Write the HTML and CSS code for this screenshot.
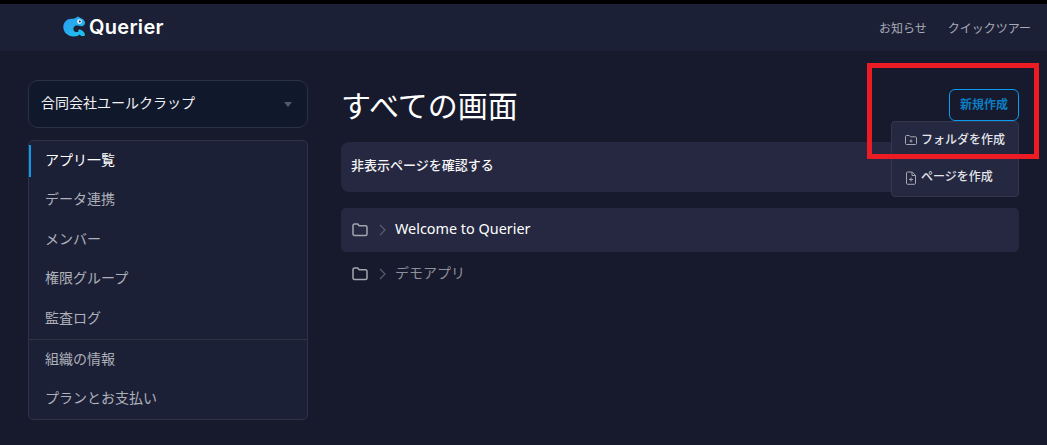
FILE: index.html
```html
<!DOCTYPE html>
<html lang="ja">
<head>
<meta charset="utf-8">
<title>Querier</title>
<link rel="stylesheet" href="styles.css">
</head>
<body>
<div class="topstrip"></div>
<header class="header">
  <div class="logo">
    <svg class="logo-mark" width="23" height="22" viewBox="0 0 23 22">
      <defs><linearGradient id="lg" x1="0" y1="0" x2="1" y2="1"><stop offset="0" stop-color="#2f9bf0"/><stop offset="1" stop-color="#19c4ee"/></linearGradient></defs>
      <path d="M15 0.5c1.500 0.800 2 1.300 3 1.700 2.500 0.800 4 2.700 4 4.600 0 2-1.600 3.400-3.600 3.400-2.600-0.200-4.400-1.400-6.400-0.300-1.800 1-2.200 3.400-0.900 5 1 1.200 2.700 1.500 4.300 0.900-0.400-0.900-0.100-2 0.800-2.300 1.600-0.400 3.600 1.200 5.100 3.300 0.600 0.900 0.700 2 0.200 3.200h-3.500c-0.300-0.800-0.700-1.300-1.300-1.600-1.300 1.200-3.400 2-6.100 2C5 20.400 0.300 16.500 0.300 11 0.300 5.600 4.700 2.200 9.500 2.700c2 0.200 3.500-1 5.500-2.200z" fill="url(#lg)"/>
      <circle cx="16.500" cy="5.600" r="2.300" fill="#eaf6ff"/><circle cx="16.800" cy="5.600" r="1" fill="#1c2036"/>
    </svg>
    <span class="logo-text">Querier</span>
  </div>
  <nav class="header-nav"><a>お知らせ</a><a>クイックツアー</a></nav>
</header>
<div class="page">
  <aside class="sidebar">
    <div class="org-select"><span>合同会社ユールクラップ</span><i class="caret"></i></div>
    <div class="menu">
      <div class="menu-group">
        <a class="menu-item active">アプリ一覧</a>
        <a class="menu-item">データ連携</a>
        <a class="menu-item">メンバー</a>
        <a class="menu-item">権限グループ</a>
        <a class="menu-item">監査ログ</a>
      </div>
      <div class="menu-group second">
        <a class="menu-item">組織の情報</a>
        <a class="menu-item">プランとお支払い</a>
      </div>
    </div>
  </aside>
  <main class="main">
    <div class="title-row">
      <h1 class="title">すべての画面</h1>
      <div class="create">
        <button class="create-btn">新規作成</button>
        <div class="dropdown">
          <div class="dropdown-item">
            <svg width="14" height="14" viewBox="0 0 14 14" fill="none" stroke="currentColor" stroke-width="1"><path d="M1.500 3.500c0-.6.400-1 1-1h2.800l1.200 1.300h5c.6 0 1 .4 1 1v5.700c0 .6-.4 1-1 1h-9c-.6 0-1-.4-1-1z"/><path d="M5.500 8h3M7 6.500v3"/></svg>
            <span>フォルダを作成</span>
          </div>
          <div class="dropdown-item">
            <svg width="14" height="14" viewBox="0 0 14 14" fill="none" stroke="currentColor" stroke-width="1"><path d="M2.500 2c0-.6.400-1 1-1h4.700l3.300 3.300v8c0 .6-.4 1-1 1h-7c-.6 0-1-.4-1-1z"/><path d="M8 1v3.500h3.500M5 8.500h4M7 6.500v4"/></svg>
            <span>ページを作成</span>
          </div>
        </div>
      </div>
    </div>
    <div class="hidden-bar">非表示ページを確認する</div>
    <div class="tree">
      <div class="tree-row selected">
        <svg class="folder" width="16" height="14" viewBox="0 0 16 14" fill="none" stroke="currentColor" stroke-width="1.500"><path d="M1 2.500C1 1.600 1.600 1 2.500 1h3.200l1.500 1.800h6.300c.9 0 1.500.6 1.500 1.500v6.700c0 .9-.6 1.500-1.500 1.500h-11C1.600 12.500 1 11.900 1 11z"/></svg>
        <svg class="chev" width="7" height="12" viewBox="0 0 7 12" fill="none" stroke="currentColor" stroke-width="1.200"><path d="M1 1l5 5-5 5"/></svg>
        <span>Welcome to Querier</span>
      </div>
      <div class="tree-row">
        <svg class="folder" width="16" height="14" viewBox="0 0 16 14" fill="none" stroke="currentColor" stroke-width="1.500"><path d="M1 2.500C1 1.600 1.600 1 2.500 1h3.200l1.500 1.800h6.300c.9 0 1.500.6 1.500 1.500v6.700c0 .9-.6 1.500-1.500 1.500h-11C1.600 12.500 1 11.900 1 11z"/></svg>
        <svg class="chev" width="7" height="12" viewBox="0 0 7 12" fill="none" stroke="currentColor" stroke-width="1.200"><path d="M1 1l5 5-5 5"/></svg>
        <span class="jp">デモアプリ</span>
      </div>
    </div>
  </main>
</div>
<div class="annotation"></div>
</body>
</html>
```
FILE: styles.css
```css
* { box-sizing: border-box; }
html, body { margin: 0; height: 100%; overflow: hidden; }
body {
  background: #171a2c;
  font-family: "Noto Sans CJK JP", "Noto Sans", sans-serif;
  font-size: 14px;
  color: #b4b6c0;
  position: relative;
}
.topstrip { height: 4px; background: #000; }
.header {
  height: 47px;
  background: #1c2036;
  display: flex;
  align-items: center;
  justify-content: space-between;
  padding: 0 16px 0 63px;
}
.logo { display: flex; align-items: center; gap: 3px; }
.logo-mark { display: block; margin-top: -1px; }
.logo-text {
  font-family: "Inter", "Liberation Sans", sans-serif;
  font-size: 20px;
  font-weight: 600;
  color: #fff;
  line-height: 1;
  margin-top: -1px;
  letter-spacing: 0.300px;
}
.header-nav { display: flex; gap: 21px; font-size: 12px; color: #a9abb6; margin-top: -1px; }
.page { display: flex; align-items: flex-start; padding: 29px 28px 0; gap: 33px; }
.sidebar { width: 280px; flex: none; }
.org-select {
  height: 48px;
  border: 1px solid #2c3145;
  border-radius: 10px;
  background: #10182c;
  color: #f2f2f4;
  display: flex;
  align-items: center;
  justify-content: space-between;
  padding: 0 15px 4px 12px;
  font-size: 14px;
}
.caret {
  width: 0; height: 0;
  border-left: 4px solid transparent;
  border-right: 4px solid transparent;
  border-top: 5px solid #555a6b;
  margin-top: 5px;
}
.menu {
  margin-top: 12px;
  height: 280px;
  border: 1px solid #2f3346;
  border-radius: 5px;
  background: #1c2036;
}
.menu-group.second { border-top: 1px solid #2f3346; }
.menu-item {
  display: flex;
  align-items: center;
  height: 39.500px;
  padding: 0 0 4px 16px;
  font-size: 14px;
  color: #aeb0ba;
}
.menu-item.active { color: #fff; position: relative; }
.menu-item.active::before {
  content: "";
  position: absolute;
  left: 0; top: 4px;
  width: 2px; height: 32px;
  background: #0a9af0;
}
.menu-group.second .menu-item:first-child { height: 39px; padding-bottom: 3px; }
.menu-group.second .menu-item:last-child { padding-bottom: 2px; }
.main { flex: 1; min-width: 0; }
.title-row { display: flex; justify-content: space-between; height: 62px; padding-top: 8px; }
.title {
  margin: 0;
  font-size: 30px;
  font-weight: 400;
  line-height: 33px;
  color: #fff;
}
.create { position: relative; margin-top: 1px; }
.create-btn {
  display: block;
  width: 70px;
  height: 32px;
  padding: 0 0 4px;
  background: transparent;
  border: 1px solid #0a9af0;
  border-radius: 6px;
  color: #0d7cc0;
  font-family: inherit;
  font-size: 12px;
  font-weight: 700;
}
.dropdown {
  position: absolute;
  right: 0;
  top: 32px;
  width: 128px;
  height: 76px;
  background: #242840;
  border: 1px solid #33374c;
  border-radius: 4px;
  display: flex;
  flex-direction: column;
  z-index: 2;
}
.dropdown-item {
  height: 37px;
  display: flex;
  align-items: center;
  gap: 3px;
  padding-left: 12px;
  font-size: 12px;
  font-weight: 500;
  color: #e4e5ea;
}
.dropdown-item + .dropdown-item { margin-top: 1px; }
.dropdown-item span { position: relative; top: -2px; }
.dropdown-item svg { color: #a4a6b2; flex: none; }
.hidden-bar {
  height: 50px;
  background: #252840;
  border-radius: 8px;
  display: flex;
  align-items: center;
  padding: 0 10px 6px;
  font-size: 13px;
  font-weight: 500;
  color: #f5f5f7;
}
.tree { margin-top: 16px; }
.tree-row {
  height: 44px;
  display: flex;
  align-items: center;
  padding: 0 0 3px 11px;
  border-radius: 5px;
  font-family: "Noto Sans", "Noto Sans CJK JP", sans-serif;
  font-size: 14.400px;
  color: #8d8f9b;
}
.tree-row.selected { background: #252840; color: #fff; }
.tree-row .jp { margin-bottom: 2px; font-size: 14px; }
.folder { color: #a3a5b0; flex: none; margin-top: 3px; }
.chev { color: #5a5d6e; flex: none; margin: 3px 9px 0 11px; }
.annotation {
  position: absolute;
  left: 867px;
  top: 63px;
  width: 172px;
  height: 96px;
  border: 5px solid #ed1c24;
  z-index: 5;
}
```
